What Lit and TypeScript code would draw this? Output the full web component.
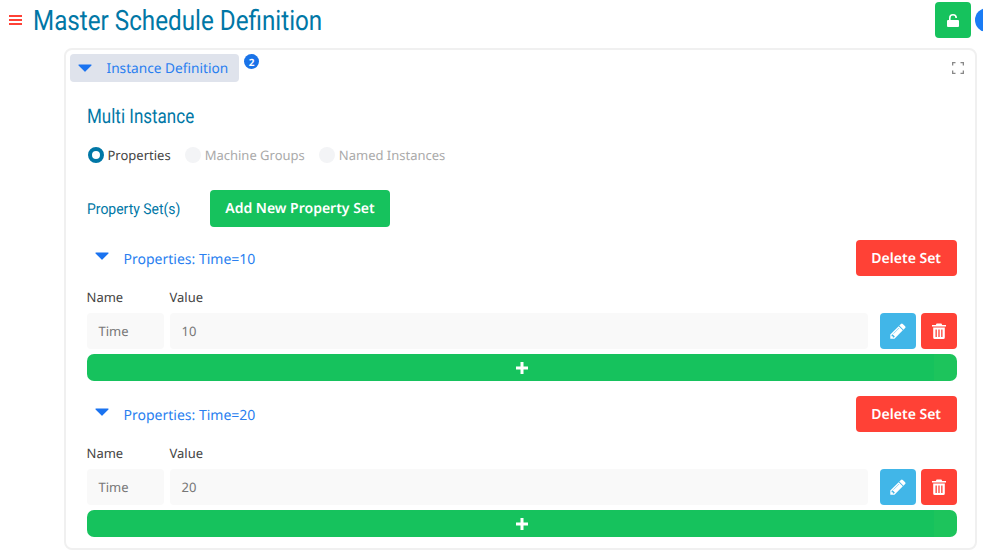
import { LitElement, html, css, svg } from "lit";
import { customElement } from "lit/decorators.js";

const PENCIL = "M491 1536l91-91-235-235-91 91v107h128v128h107zm523-928q0-22-22-22-10 0-17 7l-542 542q-7 7-7 17 0 22 22 22 10 0 17-7l542-542q7-7 7-17zm-54-192l416 416-832 832h-416v-416zm683 96q0 53-37 90l-166 166-416-416 166-165q36-38 90-38 53 0 91 38l235 234q37 39 37 91z";
const TRASH = "M4.600 .4h4.800l.8 1.600H14v1.500H0V2h3.800z M1.200 4.500h11.600v10a1.500 1.500 0 0 1-1.500 1.500H2.700a1.500 1.500 0 0 1-1.500-1.500z M3.500 6.500v7.500h1.300V6.500z M6.350 6.500v7.500h1.300V6.500z M9.200 6.500v7.500h1.300V6.500z";

const fa = (d: string, size: number) => html`<svg width=${size} height=${size} viewBox="0 0 1792 1792" fill="#fff">${svg`<path d=${d}></path>`}</svg>`;
const caret = html`<svg class="caret" width="14" height="8" viewBox="0 0 14 8"><path d="M1 .5h12a.6.6 0 0 1 .45 1L7.4 7.5a.6.6 0 0 1-.8 0L.55 1.5A.6.6 0 0 1 1 .5z" fill="#1a73f0"></path></svg>`;

@customElement("app-root")
export class AppRoot extends LitElement {
  static styles = css`
    :host { display: block; width: 983px; height: 555px; overflow: hidden; background: #fff; font-family: "Noto Sans", "Open Sans", sans-serif; font-size: 14px; color: #444; text-rendering: geometricPrecision; }
    * { box-sizing: border-box; }
    .top { display: flex; align-items: flex-start; height: 48px; }
    .burger { display: flex; flex-direction: column; gap: 2px; width: 13px; margin: 15px 11px 0 9px; }
    .burger i { display: block; height: 2px; background: #ff4136; }
    .title { font-family: Roboto, sans-serif; font-size: 28px; line-height: 40px; margin: 1px 0 0; font-weight: 400; color: #0077a6; flex: 1; white-space: nowrap; transform: scaleX(.865); transform-origin: left center; }
    .lock { width: 36px; height: 36px; margin-top: 2px; border-radius: 4px; background: #16c25d; display: flex; align-items: center; justify-content: center; }
    .lock svg { margin-top: 1px; }
    .dot { width: 24px; height: 24px; margin: 8px -16px 0 4px; border-radius: 50%; background: #1a7cf5; flex: none; }
    .card { position: relative; margin-left: 63.500px; width: 913.500px; height: 502px; border: 2px solid #f0f0f0; border-radius: 8px; padding: 4px 18.300px 0 21px; }
    .tab { display: flex; align-items: center; width: 169.500px; height: 28px; margin-left: -17px; padding-left: 8px; border-radius: 4px; background: #dfe3ec; color: #2a7ff0; font-size: 13.700px; }
    .tab .caret { margin-right: 15px; }
    .badge { position: absolute; left: 178.500px; top: 4px; width: 15px; height: 15px; border-radius: 50%; background: #1a73e8; color: #fff; font-size: 10px; font-weight: 700; display: flex; align-items: center; justify-content: center; }
    .expand { position: absolute; right: 11px; top: 12px; }
    .sub { font-family: Roboto, sans-serif; font-size: 20px; line-height: 24px; color: #0077a6; margin: 22px 0 0; font-weight: 400; transform: scaleX(.85); transform-origin: left center; }
    .radios { display: flex; align-items: center; margin-top: 17px; height: 20px; font-size: 13px; }
    .radio { width: 16px; height: 16px; border-radius: 50%; background: #f3f4f6; margin-right: 4px; flex: none; }
    .radio.on { background: #fff; border: 4px solid #0077a6; }
    .radios span { color: #aaa; margin-right: 14px; }
    .radios span.on { color: #444; }
    .first { margin-left: 1px; }
    .psets { display: flex; align-items: center; margin-top: 25px; height: 37px; }
    .plabel { font-family: Roboto, sans-serif; font-size: 15px; line-height: 38px; color: #0077a6; width: 123.500px; white-space: nowrap; transform: scaleX(.93); transform-origin: left center; }
    .btn { border: 0; border-radius: 4px; color: #fff; font: 600 14px "Noto Sans", sans-serif; display: flex; align-items: center; justify-content: center; padding: 0; text-rendering: geometricPrecision; }
    .green { background: #16c25d; }
    .red { background: #ff4136; }
    .sky { background: #41b6e8; }
    .add { width: 180px; height: 37px; }
    .sets { display: flex; flex-direction: column; gap: 15px; margin-top: 13px; }
    .head { display: flex; align-items: center; height: 36px; padding-left: 8px; }
    .head .caret { margin: -4px 15px 0 0; }
    .head a { color: #2a7ff0; flex: 1; margin-top: 2px; }
    .del { width: 101px; height: 36px; }
    .labels { display: flex; margin-top: 12px; height: 19px; line-height: 19px; font-size: 13px; }
    .labels span:first-child { width: 83px; }
    .row { display: flex; gap: 5px; margin-top: 6px; height: 36px; }
    .inp { background: #f9f9f9; border-radius: 4px; color: #777; font-size: 13px; display: flex; align-items: center; padding-left: 12px; }
    .name { width: 77px; margin-right: 1px; }
    .val { flex: 1; margin-right: 7px; }
    .ico { width: 36px; height: 36px; }
    .plus { height: 27px; margin-top: 5px; border-radius: 7px; width: 100%; background: linear-gradient(to right, #16c25d calc(100% - 23px), #1dc45c 0); }
  `;

  private renderSet(v: string) {
    return html`<section>
      <div class="head">${caret}<a>Properties: Time=${v}</a><button class="btn red del">Delete Set</button></div>
      <div class="labels"><span>Name</span><span>Value</span></div>
      <div class="row">
        <div class="inp name">Time</div>
        <div class="inp val">${v}</div>
        <button class="btn sky ico">${fa(PENCIL, 18)}</button>
        <button class="btn red ico"><svg width="14" height="16" viewBox="0 0 14 16" fill="#fff"><path fill-rule="evenodd" d=${TRASH}></path></svg></button>
      </div>
      <button class="btn green plus"><svg width="14" height="14" viewBox="0 0 14 14"><path d="M5.500 1h3v4.500H13v3H8.500V13h-3V8.500H1v-3h4.500z" fill="#fff"></path></svg></button>
    </section>`;
  }

  render() {
    return html`
      <div class="top">
        <div class="burger"><i></i><i></i><i></i></div>
        <h1 class="title">Master Schedule Definition</h1>
        <div class="lock"><svg width="12" height="13" viewBox="0 0 12 13"><rect y="6" width="12" height="7" rx="1" fill="#fff"></rect><path d="M2.800 6.500V4a3.200 3.200 0 0 1 6.400 0" fill="none" stroke="#fff" stroke-width="1.600"></path></svg></div>
        <div class="dot"></div>
      </div>
      <div class="card">
        <div class="tab">${caret}<span>Instance Definition</span></div>
        <div class="badge">2</div>
        <svg class="expand" width="12" height="12" viewBox="0 0 12 12" fill="none" stroke="#888" stroke-width="1.300"><path d="M.65 3.500V.65H3.500M8.500 .65h2.850V3.500M11.350 8.500v2.850H8.500M3.500 11.350H.65V8.500"></path></svg>
        <h2 class="sub">Multi Instance</h2>
        <div class="radios">
          <i class="radio on first"></i><span class="on">Properties</span>
          <i class="radio"></i><span>Machine Groups</span>
          <i class="radio"></i><span>Named Instances</span>
        </div>
        <div class="psets"><span class="plabel">Property Set(s)</span><button class="btn green add">Add New Property Set</button></div>
        <div class="sets">${this.renderSet("10")}${this.renderSet("20")}</div>
      </div>
    `;
  }
}
